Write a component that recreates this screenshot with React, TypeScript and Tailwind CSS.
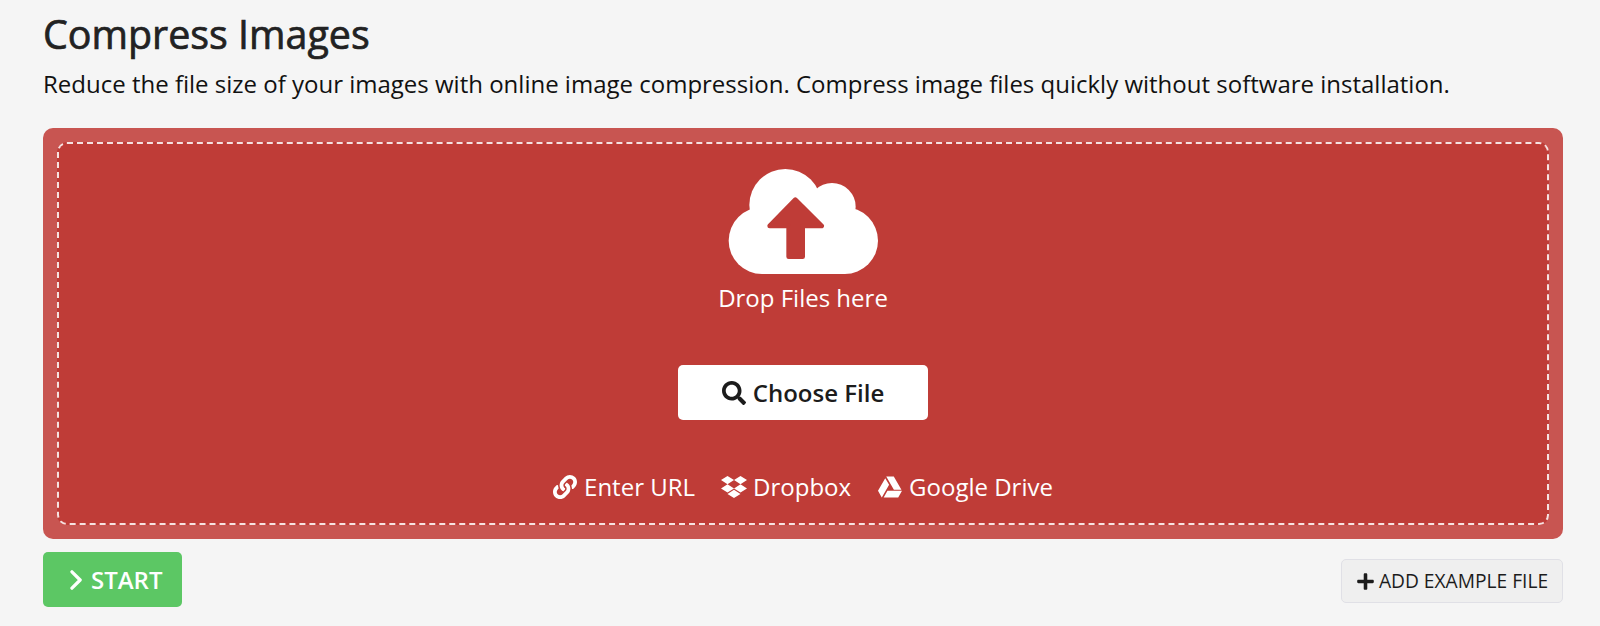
import React from "react";
import { FaSearch, FaLink, FaDropbox, FaGoogleDrive, FaPlus } from "react-icons/fa";

function CloudIcon() {
  return (
    <svg viewBox="143 57 450 315" className="w-[152px] h-[105px]">
      <g fill="#ffffff">
        <circle cx="315" cy="165" r="108" />
        <circle cx="455" cy="170" r="71" />
        <circle cx="245" cy="272" r="100" />
        <circle cx="493" cy="272" r="100" />
        <rect x="245" y="180" width="250" height="192" />
      </g>
      <path
        d="M345 149 L424 228 L367 228 L367 320 L325 320 L325 228 L268 228 Z"
        fill="#bf3c37"
        stroke="#bf3c37"
        strokeWidth="14"
        strokeLinejoin="round"
      />
    </svg>
  );
}

export default function App() {
  return (
    <div className="min-h-[626px] bg-[#f5f5f5] pl-[43px] pr-[37px] font-['Open_Sans',sans-serif] overflow-hidden">
      <h1 className="text-[39.4px] leading-[44px] font-normal [-webkit-text-stroke:0.7px_#222222] text-[#222222] pt-[12px] h-[56px]">Compress Images</h1>
      <p className="text-[24px] leading-[32px] text-[#111111] mt-[12px] whitespace-nowrap">
        Reduce the file size of your images with online image compression. Compress image files quickly without software installation.
      </p>
      <div className="mt-[28px] bg-[#c85551] rounded-[10px] p-[14px] h-[411px]">
        <div className="h-full rounded-[10px] border-2 border-dashed border-white/85 bg-[#bf3c37] flex flex-col items-center text-white pt-[25px]">
          <CloudIcon />
          <div className="text-[24px] leading-[32px] mt-[8px]">Drop Files here</div>
          <button className="mt-[51px] w-[250px] h-[55px] bg-white rounded-[5px] text-[#1c1c1c] text-[24px] font-semibold flex items-center justify-center gap-[7px]">
            <FaSearch className="text-[24px]" />
            Choose File
          </button>
          <div className="mt-[51px] flex items-center text-[24px] leading-[32px]">
            <span className="flex items-center gap-[7px]"><FaLink className="text-[24px]" />Enter URL</span>
            <span className="ml-[26px] flex items-center gap-[6px]"><FaDropbox className="text-[26px]" />Dropbox</span>
            <span className="ml-[27px] flex items-center gap-[7px]"><FaGoogleDrive className="text-[24px]" />Google Drive</span>
          </div>
        </div>
      </div>
      <div className="mt-[13px] flex items-start justify-between">
        <button className="w-[139px] h-[55px] bg-[#5cc764] rounded-[5px] text-white text-[24px] font-semibold flex items-center pl-[27px] gap-[8px]">
          <svg viewBox="0 0 14 22" className="w-[13px] h-[20px]" fill="none" stroke="#fff" strokeWidth="3.6" strokeLinecap="round" strokeLinejoin="round"><path d="M2 2 L11 11 L2 20" /></svg>
          START
        </button>
        <button className="mt-[7px] w-[222px] h-[44px] bg-[#efefef] border border-[#e0e0e6] rounded-[5px] text-[#1c1c1c] text-[19.2px] flex items-center justify-center gap-[4px]">
          <FaPlus className="text-[19px]" />
          ADD EXAMPLE FILE
        </button>
      </div>
    </div>
  );
}
